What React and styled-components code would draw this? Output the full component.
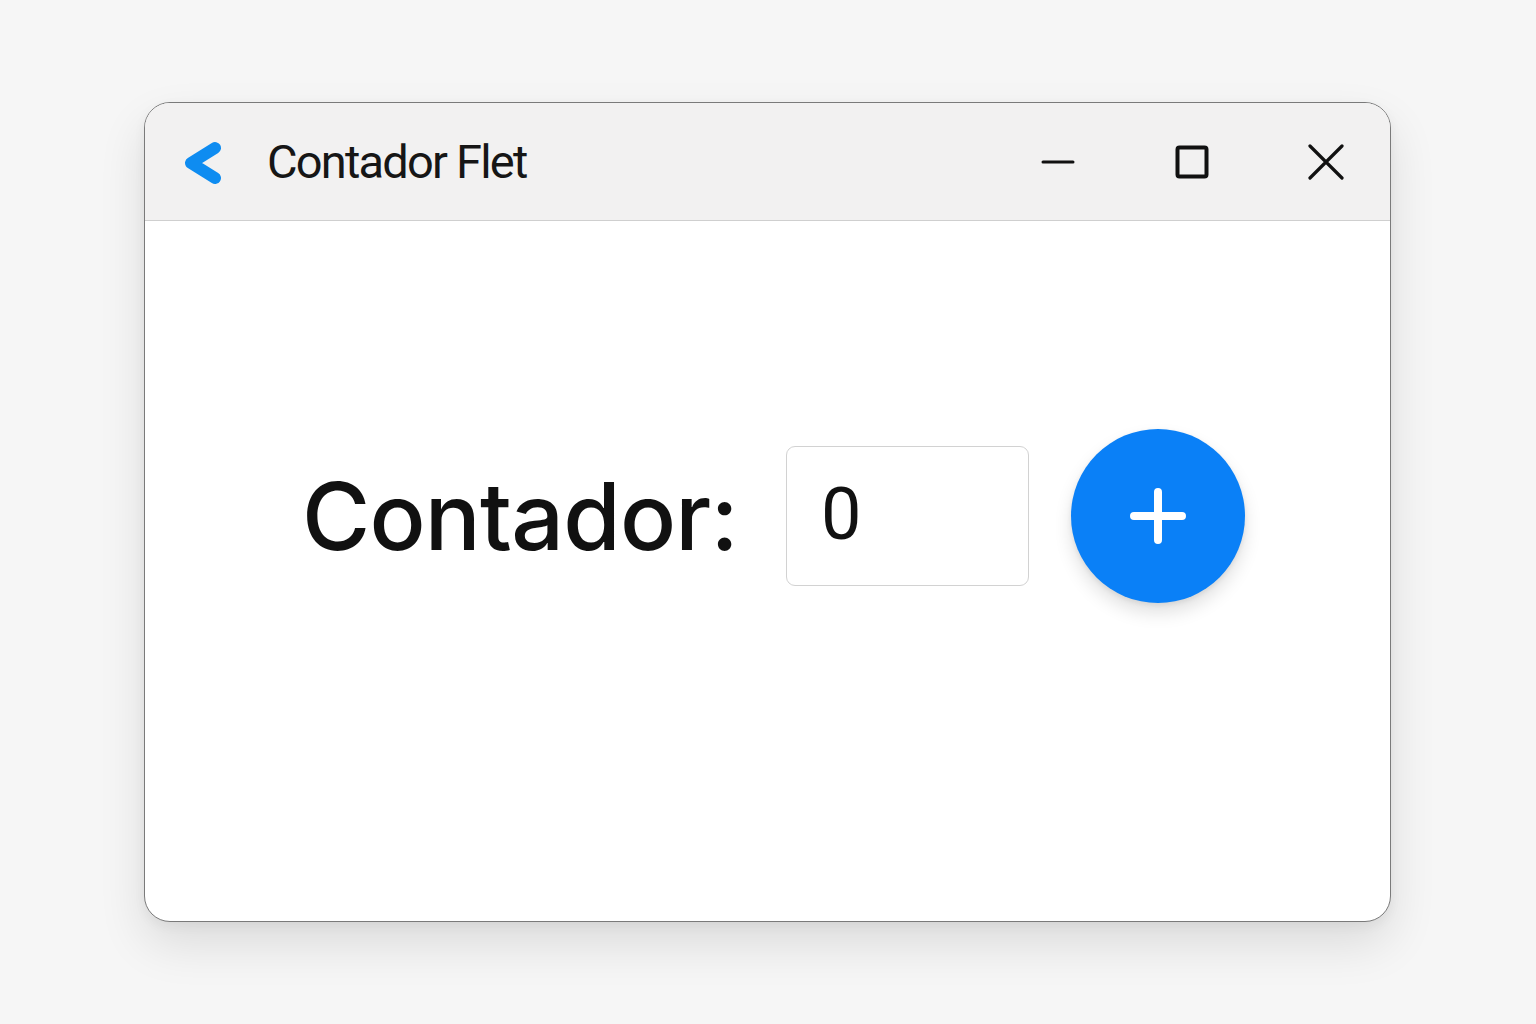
import React, { useState } from "react";
import styled, { createGlobalStyle } from "styled-components";

const GlobalStyle = createGlobalStyle`
  html, body {
    margin: 0;
    padding: 0;
    background: #f6f6f6;
  }
  body {
    font-family: Roboto, "Liberation Sans", sans-serif;
  }
`;

const Page = styled.div`
  width: 1536px;
  height: 1024px;
  box-sizing: border-box;
  padding: 102px 0 0 144px;
`;

const Window = styled.div`
  width: 1247px;
  height: 820px;
  box-sizing: border-box;
  border: 1px solid #7a7a7a;
  border-radius: 26px;
  background: #fff;
  overflow: hidden;
  display: flex;
  flex-direction: column;
  box-shadow: 0 22px 48px rgba(0, 0, 0, 0.11), 0 4px 12px rgba(0, 0, 0, 0.05);
`;

const TitleBar = styled.div`
  height: 118px;
  flex-shrink: 0;
  box-sizing: border-box;
  background: #f2f1f1;
  border-bottom: 1px solid #cfcfcf;
  display: flex;
  align-items: center;
  padding: 0 42px 0 36px;
`;

const BackButton = styled.button`
  border: none;
  background: none;
  padding: 0;
  width: 44px;
  height: 46px;
  margin-top: 3px;
  display: flex;
  align-items: center;
  justify-content: center;
  cursor: pointer;
`;

const Title = styled.h1`
  margin: 0 0 0 42px;
  font-family: Roboto, "Liberation Sans", sans-serif;
  font-weight: 400;
  font-size: 47px;
  letter-spacing: -1.8px;
  color: #161616;
  flex: 1;
  line-height: 1;
`;

const WinControls = styled.div`
  display: flex;
  align-items: center;
  gap: 90px;
`;

const WinButton = styled.button`
  border: none;
  background: none;
  padding: 0;
  width: 44px;
  height: 44px;
  display: flex;
  align-items: center;
  justify-content: center;
  color: #111;
  cursor: pointer;
`;

const Body = styled.div`
  flex: 1;
  display: flex;
  justify-content: center;
  align-items: flex-start;
  padding-top: 208px;
  padding-left: 12px;
`;

const CounterRow = styled.div`
  display: flex;
  align-items: center;
`;

const Label = styled.span`
  font-family: Inter, "Noto Sans", sans-serif;
  font-weight: 500;
  font-size: 93px;
  letter-spacing: -0.8px;
  color: #111;
  line-height: 1;
  margin-right: 48px;
`;

const ValueField = styled.input`
  width: 243px;
  height: 140px;
  box-sizing: border-box;
  border: 1.5px solid #d2d2d2;
  border-radius: 9px;
  background: #fff;
  padding: 0 0 4px 34px;
  font-family: Roboto, "Liberation Sans", sans-serif;
  font-size: 72px;
  color: #111;
  outline: none;
  margin-right: 42px;
`;

const Fab = styled.button`
  width: 174px;
  height: 174px;
  border-radius: 50%;
  border: none;
  background: #0a80f7;
  display: flex;
  align-items: center;
  justify-content: center;
  box-shadow: 0 10px 18px rgba(0, 0, 0, 0.12), 0 2px 5px rgba(0, 0, 0, 0.08);
  cursor: pointer;
`;

const App = () => {
  const [count, setCount] = useState(0);

  return (
    <Page>
      <GlobalStyle />
      <Window>
        <TitleBar>
          <BackButton aria-label="back">
            <svg width="44" height="46" viewBox="0 0 44 46">
              <path
                d="M34 8 L10 23 L34 38"
                fill="none"
                stroke="#0e8cf1"
                strokeWidth="12"
                strokeLinecap="round"
                strokeLinejoin="round"
              />
            </svg>
          </BackButton>
          <Title>Contador Flet</Title>
          <WinControls>
            <WinButton aria-label="minimize">
              <svg width="34" height="34" viewBox="0 0 34 34">
                <path d="M2 17 H32" stroke="currentColor" strokeWidth="3" strokeLinecap="round" />
              </svg>
            </WinButton>
            <WinButton aria-label="maximize">
              <svg width="34" height="34" viewBox="0 0 34 34">
                <rect x="2.5" y="2.5" width="29" height="29" rx="2" fill="none" stroke="currentColor" strokeWidth="4" />
              </svg>
            </WinButton>
            <WinButton aria-label="close">
              <svg width="36" height="36" viewBox="0 0 36 36">
                <path d="M2 2 L34 34 M34 2 L2 34" stroke="currentColor" strokeWidth="3.2" strokeLinecap="round" />
              </svg>
            </WinButton>
          </WinControls>
        </TitleBar>
        <Body>
          <CounterRow>
            <Label>Contador:</Label>
            <ValueField value={count} readOnly />
            <Fab aria-label="add" onClick={() => setCount(count + 1)}>
              <svg width="56" height="56" viewBox="0 0 56 56">
                <path d="M28 4 V52 M4 28 H52" stroke="#fff" strokeWidth="8" strokeLinecap="round" />
              </svg>
            </Fab>
          </CounterRow>
        </Body>
      </Window>
    </Page>
  );
};

export default App;
